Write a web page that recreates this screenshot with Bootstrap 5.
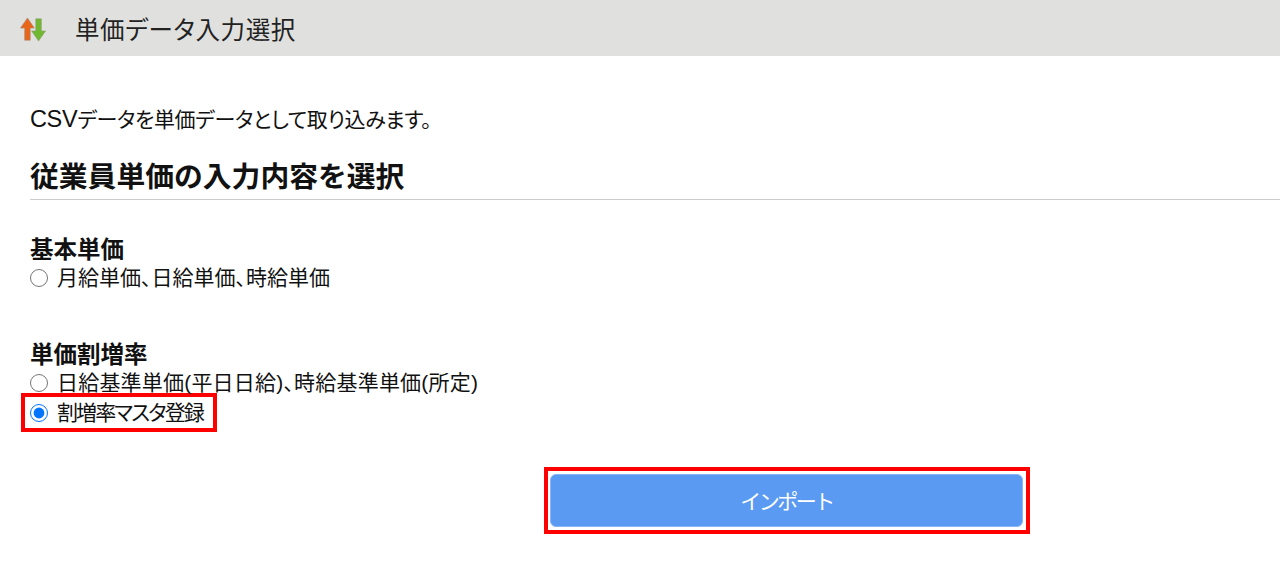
<!DOCTYPE html>
<html lang="ja"><head><meta charset="utf-8"><title>単価データ入力選択</title>
<link href="https://cdn.jsdelivr.net/npm/bootstrap@5.3.0/dist/css/bootstrap.min.css" rel="stylesheet">
<style>
html,body{height:570px;overflow:hidden}
body{font-family:"Liberation Sans","Noto Sans CJK JP",sans-serif;color:#111;background:#fff;font-feature-settings:"palt"}
.top-strip{height:56px;background:#e0e0de;padding:3px 0 0 18px;gap:27px}
.top-strip h1{font-size:24.5px;font-weight:400;margin:3px 0 0;color:#222;line-height:1;letter-spacing:.6px}
.main-area{padding:51px 0 0 30px}
.intro{font-size:21px;line-height:24px;margin:0 0 26px;letter-spacing:-.35px}
.intro-latin{font-size:23.500px}
.sec-title{font-size:28.800px;font-weight:700;line-height:38px;margin:0;padding-bottom:3px;border-bottom:1px solid #ccc;font-feature-settings:normal}
.grp-title{font-size:23.500px;font-weight:700;line-height:26px;margin:0}
.grp-a{margin-top:37px}.grp-b{margin-top:50px}
.opt{display:flex;align-items:center;gap:9px;font-size:21px;line-height:28px;height:28px;margin:1px 0 0;white-space:nowrap}
.opt-wide{letter-spacing:.2px}
.opt input{width:18px;height:18px;margin:0;flex:none;accent-color:#0075ff}
.sel-box{display:flex;align-items:center;border:4px solid #f00;height:39px;width:196px;padding-left:5px;margin:-4px 0 0 -9px}
.sel-box .opt{margin:0;letter-spacing:-1.9px}
.act-row{padding-left:514px;margin-top:35px}
.act-frame{border:4px solid #f00;width:486px;height:67px;padding:3px 3px 3px 2px}
.act-btn{display:block;width:100%;height:100%;background:#5a9af2;border:1px solid #8ab6f5;border-radius:6px;color:#fff;font-size:21px;padding:3px 0 0;letter-spacing:-2.500px}
</style></head><body>
<header class="top-strip d-flex align-items-center">
<svg width="30" height="25" viewBox="0 0 30 27"><path d="M9 1 1.500 12H6v13h6V12h4.500z" fill="#e8651a" stroke="#9a8a78" stroke-width=".6"/><path d="M21 26l7.500-11H24V2h-6v13h-4.500z" fill="#70b82e" stroke="#8a9a78" stroke-width=".6"/></svg>
<h1>単価データ入力選択</h1></header>
<main class="main-area">
<p class="intro"><span class="intro-latin">CSV</span>データを単価データとして取り込みます。</p>
<h2 class="sec-title">従業員単価の入力内容を選択</h2>
<div class="grp-a"><h3 class="grp-title">基本単価</h3>
<label class="opt"><input type="radio" name="a">月給単価、日給単価、時給単価</label></div>
<div class="grp-b"><h3 class="grp-title">単価割増率</h3>
<label class="opt opt-wide"><input type="radio" name="b">日給基準単価(平日日給)、時給基準単価(所定)</label>
<div class="sel-box"><label class="opt"><input type="radio" name="b" checked>割増率マスタ登録</label></div></div>
<div class="act-row"><div class="act-frame"><button class="act-btn" type="button">インポート</button></div></div>
</main>
<script src="https://cdn.jsdelivr.net/npm/bootstrap@5.3.0/dist/js/bootstrap.bundle.min.js"></script>
</body></html>
